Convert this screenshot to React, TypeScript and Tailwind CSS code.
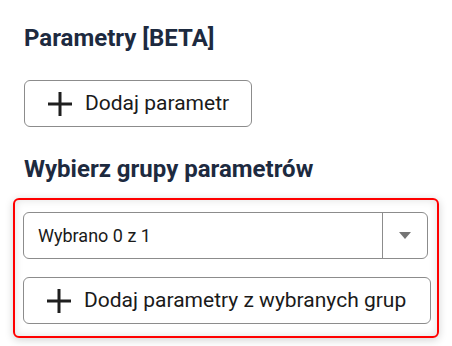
function PlusIcon() {
  return (
    <svg width="26" height="26" viewBox="0 0 26 26" aria-hidden="true">
      <path d="M13 1v24M1 13h24" stroke="#1f1f1f" strokeWidth="3" fill="none" />
    </svg>
  );
}

function OutlineButton({ label }: { label: string }) {
  return (
    <button
      type="button"
      className="flex h-[47px] items-center gap-[12px] rounded-[6px] border border-[#8c8c8c] bg-white pl-[22px] pr-[22px] text-[21px] text-[#1a1a1a]"
    >
      <PlusIcon />
      <span>{label}</span>
    </button>
  );
}

export default function App() {
  return (
    <div
      className="h-[346px] w-[452px] bg-white pl-6 pt-[22px]"
      style={{ fontFamily: 'Roboto, "Noto Sans", sans-serif' }}
    >
      {/* Parametry */}
      <h2 className="text-[24px] font-bold leading-[32px] text-[#1d2a3f]">Parametry [BETA]</h2>
      <div className="mt-[26px] flex">
        <OutlineButton label="Dodaj parametr" />
      </div>

      <h2 className="mt-[26px] text-[24px] font-bold leading-[32px] text-[#1d2a3f]">
        Wybierz grupy parametrów
      </h2>

      {/* Grupy */}
      <div className="-ml-[11px] mt-[13px] w-[426px] rounded-[6px] border-2 border-[#ff0000] py-[12px] pl-[8px] pr-[6px] shadow-[0_2px_8px_rgba(0,0,0,0.18),inset_0_0_8px_rgba(0,0,0,0.12)]">
        <div className="flex h-[47px] w-[405px] items-stretch rounded-[6px] border border-[#8c8c8c] bg-white">
          <div className="flex flex-1 items-center pl-[14px] text-[18px] text-[#1a1a1a]">Wybrano 0 z 1</div>
          <div className="flex w-[45px] items-center justify-center border-l border-[#8c8c8c]">
            <svg width="12" height="7" viewBox="0 0 12 7" aria-hidden="true">
              <path d="M0 0h12L6 7z" fill="#757575" />
            </svg>
          </div>
        </div>
        <div className="mt-[18px] flex">
          <button
            type="button"
            className="flex h-[47px] w-[408px] items-center gap-[12px] rounded-[6px] border border-[#8c8c8c] bg-white pl-[22px] text-[21px] text-[#1a1a1a]"
          >
            <PlusIcon />
            <span>Dodaj parametry z wybranych grup</span>
          </button>
        </div>
      </div>
    </div>
  );
}
